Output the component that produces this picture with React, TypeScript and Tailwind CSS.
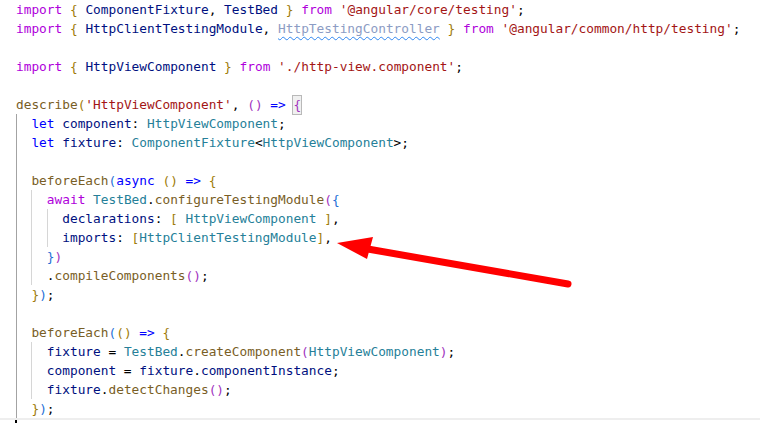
import React from "react";

type Tok = [string, string];

// token colours (VS Code light+, with bracket pair colours)
const K = {
  kp: "text-[#AF00DB]",
  kb: "text-[#0000FF]",
  v: "text-[#001080]",
  ty: "text-[#267F99]",
  fn: "text-[#795E26]",
  s: "text-[#A31515]",
  p: "text-[#000000]",
  b1: "text-[#9E7B08]",
  b2: "text-[#A032BE]",
  b3: "text-[#1F6FD6]",
  dim: "text-[#8C9CC4] underline decoration-wavy decoration-[#2F86F0] decoration-1 underline-offset-[3px]",
};

type Line = { guides: number[]; toks: Tok[]; active?: boolean };

const lines: Line[] = [
  {
    guides: [],
    toks: [
      [K.kp, "import"], [K.p, " "], [K.b1, "{"], [K.p, " "], [K.v, "ComponentFixture"], [K.p, ", "],
      [K.v, "TestBed"], [K.p, " "], [K.b1, "}"], [K.p, " "], [K.kp, "from"], [K.p, " "],
      [K.s, "'@angular/core/testing'"], [K.p, ";"],
    ],
  },
  {
    guides: [],
    toks: [
      [K.kp, "import"], [K.p, " "], [K.b1, "{"], [K.p, " "], [K.v, "HttpClientTestingModule"], [K.p, ", "],
      [K.dim, "HttpTestingController"], [K.p, " "], [K.b1, "}"], [K.p, " "], [K.kp, "from"], [K.p, " "],
      [K.s, "'@angular/common/http/testing'"], [K.p, ";"],
    ],
  },
  { guides: [], toks: [] },
  {
    guides: [],
    toks: [
      [K.kp, "import"], [K.p, " "], [K.b1, "{"], [K.p, " "], [K.v, "HttpViewComponent"], [K.p, " "],
      [K.b1, "}"], [K.p, " "], [K.kp, "from"], [K.p, " "], [K.s, "'./http-view.component'"], [K.p, ";"],
    ],
  },
  { guides: [], toks: [] },
  {
    guides: [],
    toks: [
      [K.fn, "describe"], [K.b1, "("], [K.s, "'HttpViewComponent'"], [K.p, ", "], [K.b2, "()"], [K.p, " "],
      [K.kb, "=>"], [K.p, " "], ["match " + K.b2, "{"],
    ],
  },
  {
    guides: [0],
    toks: [[K.kb, "let"], [K.p, " "], [K.v, "component"], [K.p, ": "], [K.ty, "HttpViewComponent"], [K.p, ";"]],
  },
  {
    guides: [0],
    toks: [
      [K.kb, "let"], [K.p, " "], [K.v, "fixture"], [K.p, ": "], [K.ty, "ComponentFixture"], [K.p, "<"],
      [K.ty, "HttpViewComponent"], [K.p, ">;"],
    ],
  },
  { guides: [0], toks: [] },
  {
    guides: [0],
    toks: [
      [K.fn, "beforeEach"], [K.b3, "("], [K.kb, "async"], [K.p, " "], [K.b1, "()"], [K.p, " "], [K.kb, "=>"],
      [K.p, " "], [K.b1, "{"],
    ],
  },
  {
    guides: [0, 1],
    toks: [
      [K.kp, "await"], [K.p, " "], [K.ty, "TestBed"], [K.p, "."], [K.fn, "configureTestingModule"],
      [K.b2, "("], [K.b3, "{"],
    ],
  },
  {
    guides: [0, 1, 2],
    toks: [
      [K.v, "declarations"], [K.p, ": "], [K.b1, "["], [K.p, " "], [K.ty, "HttpViewComponent"], [K.p, " "],
      [K.b1, "]"], [K.p, ","],
    ],
  },
  {
    guides: [0, 1, 2],
    toks: [[K.v, "imports"], [K.p, ": "], [K.b1, "["], [K.ty, "HttpClientTestingModule"], [K.b1, "]"], [K.p, ","]],
  },
  { guides: [0, 1], toks: [[K.b3, "}"], [K.b2, ")"]] },
  { guides: [0, 1], toks: [[K.p, "."], [K.fn, "compileComponents"], [K.b2, "()"], [K.p, ";"]] },
  { guides: [0], toks: [[K.b1, "}"], [K.b3, ")"], [K.p, ";"]] },
  { guides: [0], toks: [] },
  {
    guides: [0],
    toks: [[K.fn, "beforeEach"], [K.b3, "("], [K.b1, "()"], [K.p, " "], [K.kb, "=>"], [K.p, " "], [K.b1, "{"]],
  },
  {
    guides: [0, 1],
    toks: [
      [K.v, "fixture"], [K.p, " = "], [K.ty, "TestBed"], [K.p, "."], [K.fn, "createComponent"], [K.b2, "("],
      [K.ty, "HttpViewComponent"], [K.b2, ")"], [K.p, ";"],
    ],
  },
  {
    guides: [0, 1],
    toks: [[K.v, "component"], [K.p, " = "], [K.v, "fixture"], [K.p, "."], [K.v, "componentInstance"], [K.p, ";"]],
  },
  {
    guides: [0, 1],
    toks: [[K.v, "fixture"], [K.p, "."], [K.fn, "detectChanges"], [K.b2, "()"], [K.p, ";"]],
  },
  { guides: [0], toks: [[K.b1, "}"], [K.b3, ")"], [K.p, ";"]] },
  { guides: [0], toks: [], active: true },
];

// indentation level of each line, in 2-space steps
const depth = [0, 0, 0, 0, 0, 0, 1, 1, 1, 1, 2, 3, 3, 2, 2, 1, 1, 1, 2, 2, 2, 1, 1];

const CodeLine = ({ line, level }: { line: Line; level: number }) => {
  const indents = Array.from({ length: level }, (_, i) => i);
  return (
    <div
      className={
        line.active
          ? "relative flex h-[19px] pl-[16px] border-t-2 border-[#EEEEEE]"
          : "relative flex h-[19px] pl-[16px]"
      }
    >
      {indents.map((i) => (
        <span
          key={i}
          className={
            line.guides.includes(i)
              ? i === 0
                ? "inline-block w-[2ch] shrink-0 shadow-[inset_1px_0_0_#A3A3A3]"
                : "inline-block w-[2ch] shrink-0 shadow-[inset_1px_0_0_#D6D6D6]"
              : "inline-block w-[2ch] shrink-0"
          }
        />
      ))}
      {line.active && <span className="absolute left-[15px] top-0 w-[2px] h-[19px] bg-black" />}
      <span className="whitespace-pre leading-[19px]">
        {line.toks.map(([cls, txt], i) =>
          cls.startsWith("match ") ? (
            <span
              key={i}
              className={
                cls.slice(6) +
                " inline-block h-[18px] leading-[17px] outline outline-1 outline-[#B9B9B9] bg-[#F0F0F0]"
              }
            >
              {txt}
            </span>
          ) : (
            <span key={i} className={cls}>
              {txt}
            </span>
          )
        )}
      </span>
    </div>
  );
};

const App = () => {
  return (
    <div className="relative w-[760px] h-[423px] overflow-hidden bg-white">
      <div
        className="text-[12.8px] text-black"
        style={{ fontFamily: "'DejaVu Sans Mono', 'Liberation Mono', monospace" }}
      >
        {lines.map((line, i) => (
          <CodeLine key={i} line={line} level={depth[i]} />
        ))}
      </div>

      {/* red annotation arrow */}
      <svg
        className="absolute inset-0 pointer-events-none"
        width="760"
        height="423"
        viewBox="0 0 760 423"
      >
        <line x1="568" y1="284" x2="362" y2="248" stroke="#FF0000" strokeWidth="7" strokeLinecap="round" />
        <polygon points="337,243 373,237 367,259" fill="#FF0000" />
      </svg>
    </div>
  );
};

export default App;
